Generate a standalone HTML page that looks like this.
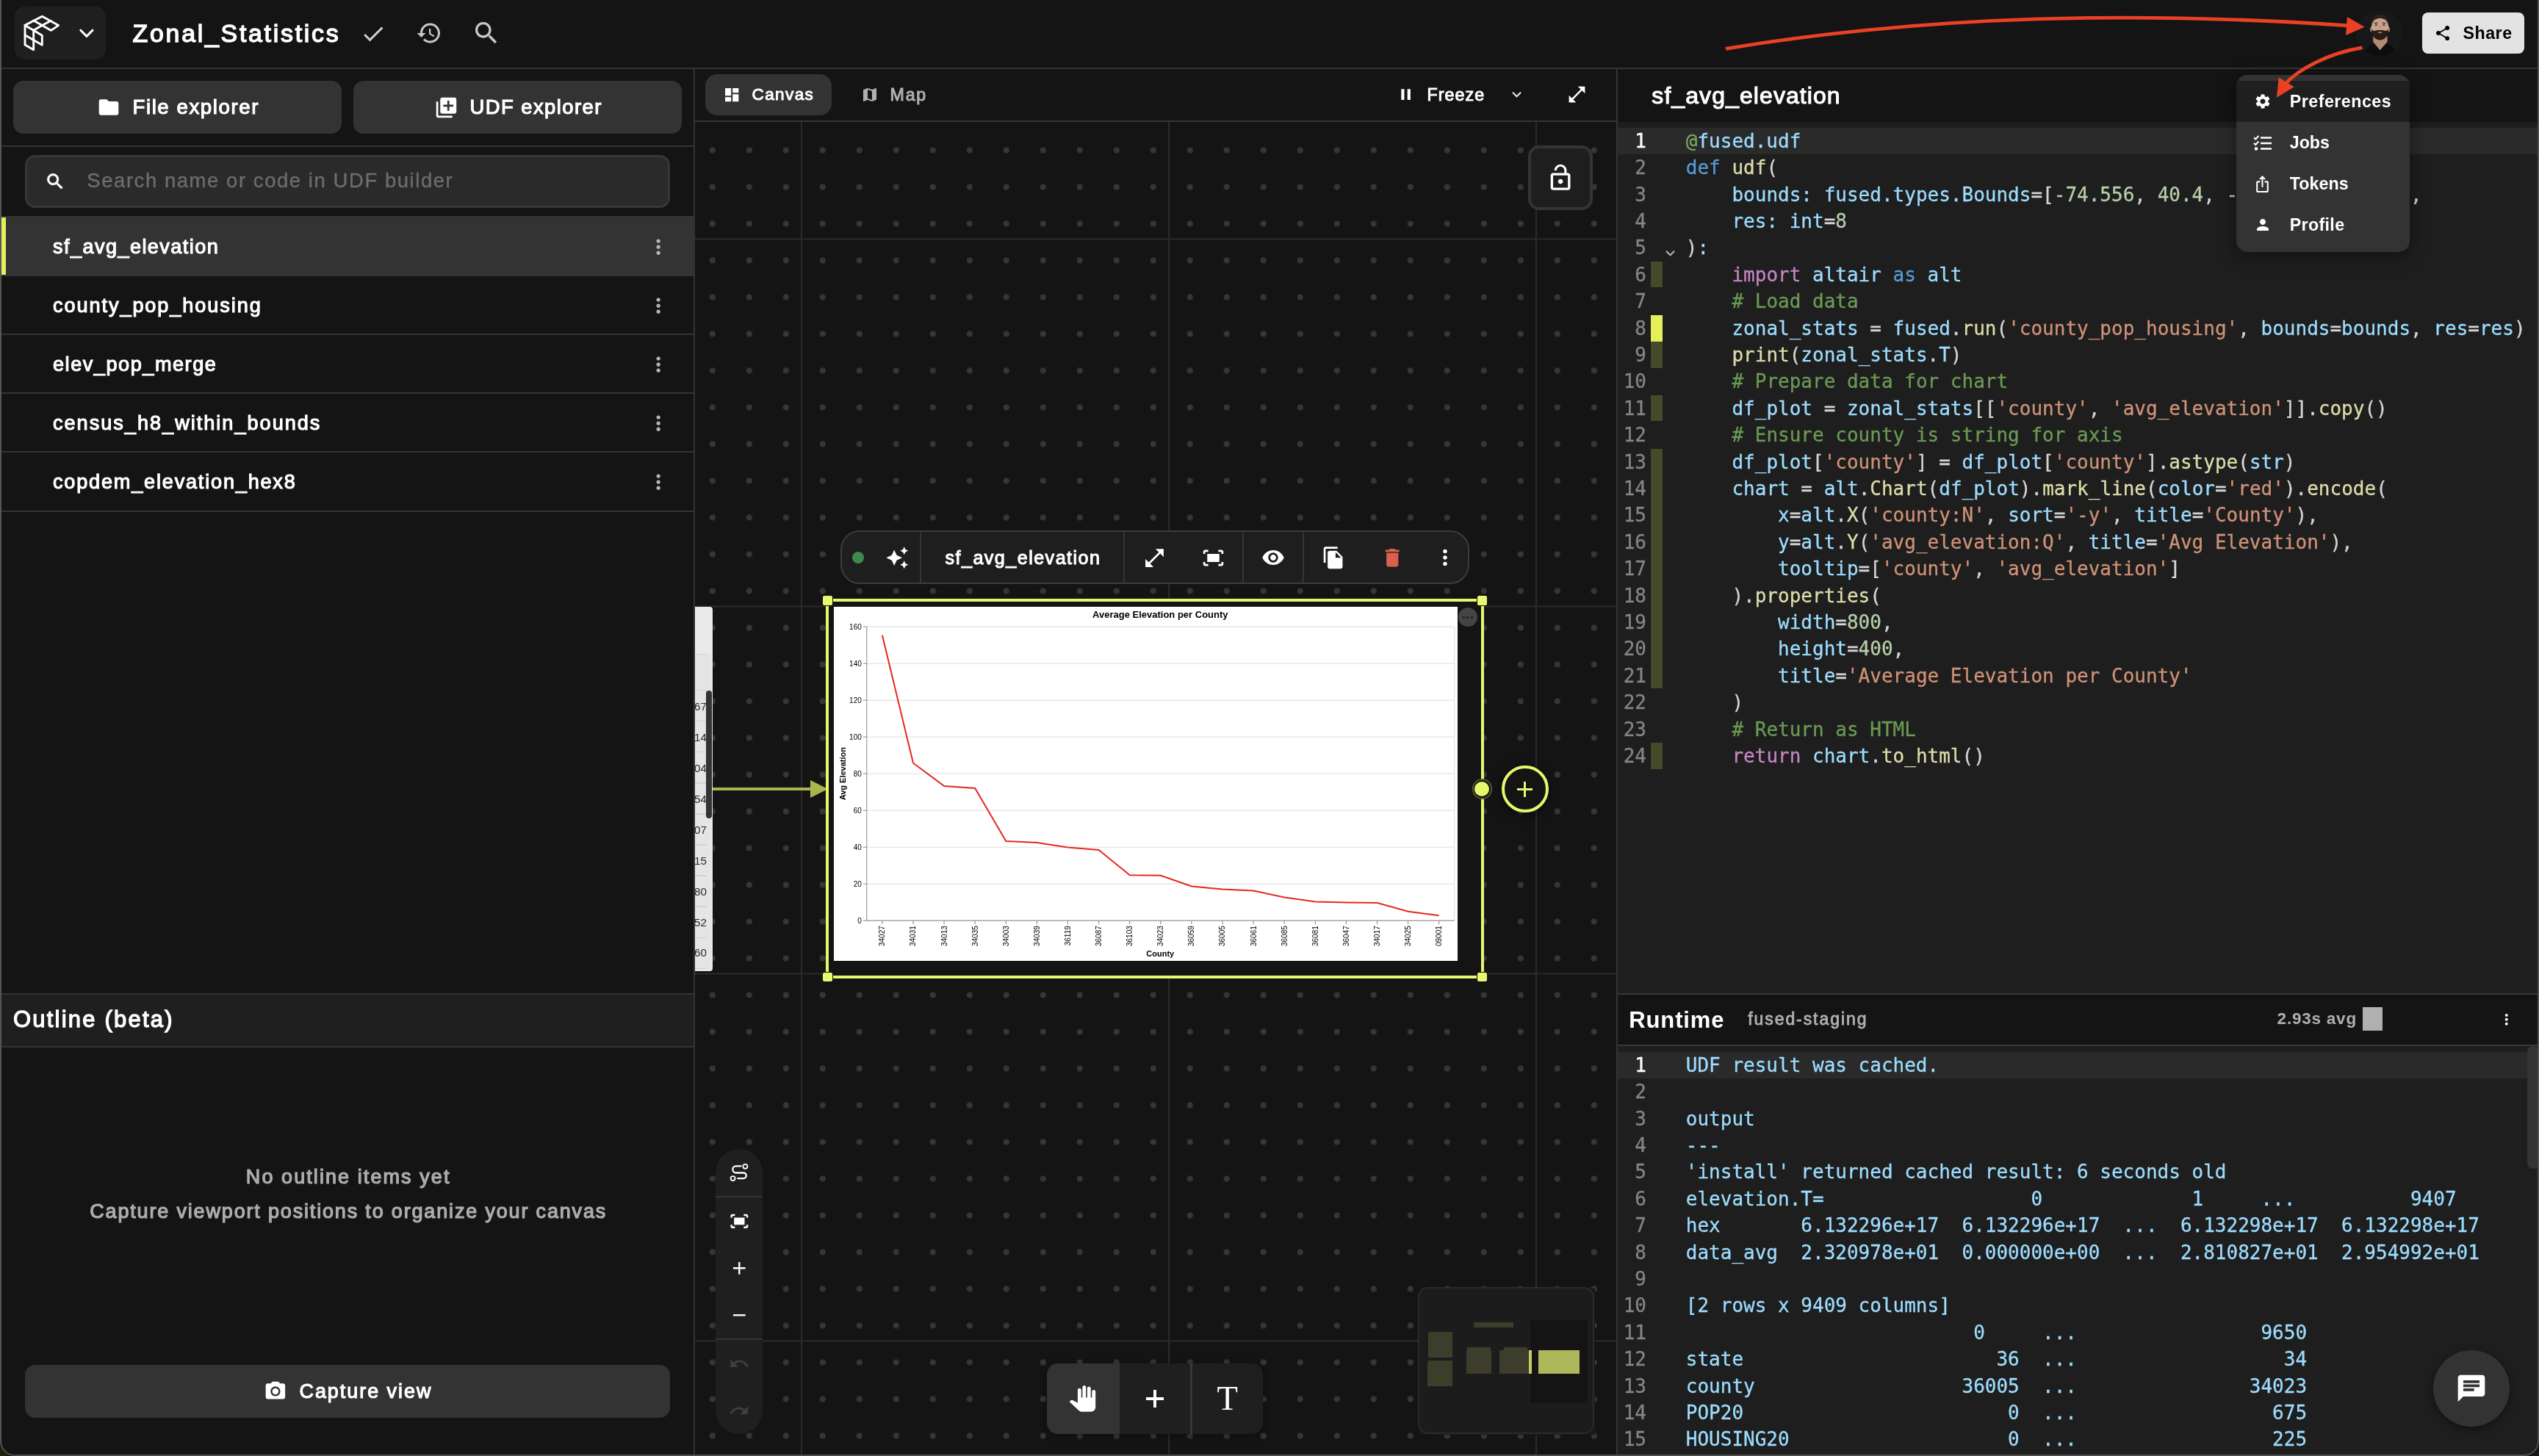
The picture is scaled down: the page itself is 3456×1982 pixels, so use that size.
<!DOCTYPE html>
<html lang="en"><head><meta charset="utf-8"><title>Zonal_Statistics</title>
<style>
html,body{margin:0;padding:0;}
body{width:3456px;height:1982px;overflow:hidden;background:#1b2313;font-family:"Liberation Sans",Arial,sans-serif;}
#app{will-change:transform;transform:translateZ(0);position:absolute;left:0;top:0;width:3456px;height:1982px;background:#141414;overflow:hidden;border-radius:0 0 20px 20px;}
.b{position:absolute;box-sizing:border-box;}
.t{position:absolute;white-space:pre;}
.ic{position:absolute;display:block;overflow:visible;}
.mono{font-family:"DejaVu Sans Mono","Liberation Mono",monospace;}
.code{-webkit-text-stroke:0.3px currentColor;position:absolute;white-space:pre;font-family:"DejaVu Sans Mono","Liberation Mono",monospace;font-size:26px;line-height:36.4px;height:36.4px;color:#d4d4d4;}
.ln{-webkit-text-stroke:0.3px currentColor;position:absolute;font-family:"DejaVu Sans Mono","Liberation Mono",monospace;font-size:26px;line-height:36.4px;height:36.4px;color:#858585;text-align:right;width:60px;}
.k{color:#569cd6}.c{color:#c586c0}.f{color:#dcdcaa}.v{color:#9cdcfe}.n{color:#b5cea8}.s{color:#ce9178}.m{color:#6a9955}.d{color:#78a860}
.serif{font-family:"Liberation Serif","DejaVu Serif",serif;}

</style></head>
<body>
<div style="position:absolute;left:3400px;top:1930px;width:56px;height:52px;background:#0f171c"></div>
<div id="app">
<!-- header -->
<div class="b " style="left:0.0px;top:0.0px;width:3456.0px;height:92.0px;background:#141414;"></div>
<div class="b " style="left:0.0px;top:92.0px;width:3456.0px;height:2.0px;background:#333;"></div>
<div class="b " style="left:20.0px;top:9.0px;width:124.0px;height:72.0px;background:#1f1f1f;border-radius:14px;"></div>
<svg class="ic" style="left:0;top:0;width:160px;height:92px" viewBox="0 0 160 92"><g fill="none" stroke="#fff" stroke-width="2.9" stroke-linejoin="round" stroke-linecap="round"><path d="M34 34.4L57.4 22.2L79.5 34.6L69.5 41.4L57.4 34.5L45.7 41.3Z"/><path d="M45.7 28.0L57.4 34.5L69.2 28.2"/><path d="M34 34.4V61L45.7 67.8V41.3"/><path d="M34 47.7L45.7 54.6"/><path d="M45.7 41.3L57.3 48.3V61.2L45.7 54.6"/><path d="M109.8 41.2L117.9 49.4L126 41.2" stroke-width="3"/></g></svg>
<div class="t " id="title" style="-webkit-text-stroke:1.40px #fff;left:180.6px;top:20.0px;font-size:33.88px;line-height:50px;height:50px;color:#fff;font-weight:normal;letter-spacing:2.733px;">Zonal_Statistics</div>
<svg class="ic" style="left:490.0px;top:27.6px;width:36.0px;height:36.0px;" viewBox="0 0 24 24"><path fill="#d0d0d0" d="M9 16.17L4.83 12l-1.42 1.41L9 19 21 7l-1.41-1.41z"/></svg>
<svg class="ic" style="left:565.6px;top:26.6px;width:36.0px;height:36.0px;" viewBox="0 0 24 24"><path fill="#c8c8c8" d="M13 3c-4.97 0-9 4.03-9 9H1l3.89 3.89.07.14L9 12H6c0-3.87 3.13-7 7-7s7 3.13 7 7-3.13 7-7 7c-1.93 0-3.68-.79-4.94-2.06l-1.42 1.42C8.27 19.99 10.51 21 13 21c4.97 0 9-4.03 9-9s-4.03-9-9-9zm-1 5v5l4.28 2.54.72-1.21-3.5-2.08V8H12z"/></svg>
<svg class="ic" style="left:642.0px;top:25.2px;width:40.0px;height:40.0px;" viewBox="0 0 24 24"><path fill="#c8c8c8" d="M15.5 14h-.79l-.28-.27C15.41 12.59 16 11.11 16 9.5 16 5.91 13.09 3 9.5 3S3 5.91 3 9.5 5.91 16 9.5 16c1.61 0 3.09-.59 4.23-1.57l.27.28v.79l5 4.99L20.49 19l-4.99-5zm-6 0C7.01 14 5 11.99 5 9.5S7.01 5 9.5 5 14 7.01 14 9.5 11.99 14 9.5 14z"/></svg>
<svg class="ic" style="left:3204.8px;top:11.1px;width:68px;height:68px" viewBox="-34 -34 68 68"><defs><clipPath id="avc"><circle cx="0" cy="0" r="31.8"/></clipPath><filter id="avb" x="-10%" y="-10%" width="120%" height="120%"><feGaussianBlur stdDeviation="0.55"/></filter></defs><circle cx="0" cy="0" r="31.8" fill="#18181b"/><g clip-path="url(#avc)"><g filter="url(#avb)"><path d="M-20 34C-20 20 -14 17 -9 14L0.6 23.4L10.5 14C16 17 22 20 22 34Z" fill="#0f0f11"/><path d="M-8.7 4H10.5V12L0.6 23.2L-8.7 12Z" fill="#b48a74"/><ellipse cx="-11.2" cy="-5" rx="1.6" ry="3.6" fill="#b98f7a"/><ellipse cx="12.4" cy="-5" rx="1.6" ry="3.6" fill="#b98f7a"/><ellipse cx="0.6" cy="-8" rx="11.7" ry="16" fill="#c9a28c"/><path d="M-11.3 -8C-12.4 -22 -4 -25 0.6 -25C5.2 -25 13.6 -22 12.5 -8C11.6 -15 9 -19.6 0.6 -20.2C-7.8 -19.6 -10.4 -15 -11.3 -8Z" fill="#2b231f"/><path d="M-11.2 -6C-11 4 -6 9.6 0.6 9.6C7.2 9.6 12.2 4 12.4 -6C10.8 -2.2 8.4 -3 6 -3.4C3.6 -4.2 2.2 -3.8 0.6 -3.8C-1 -3.8 -2.4 -4.2 -4.8 -3.4C-7.2 -3 -9.6 -2.2 -11.2 -6Z" fill="#2a1c17"/><ellipse cx="0.6" cy="-0.7" rx="3.1" ry="1.0" fill="#a8746a"/><path d="M-7.2 -13.4L-2.4 -13.9M3.6 -13.9L8.4 -13.4" stroke="#3b2d26" stroke-width="1.4" fill="none"/><ellipse cx="-4.6" cy="-11" rx="1.7" ry="0.9" fill="#3c3a3e"/><ellipse cx="5.9" cy="-11" rx="1.7" ry="0.9" fill="#3c3a3e"/><path d="M0.6 -10V-5.5" stroke="#b8917c" stroke-width="1.6" fill="none"/></g></g></svg>
<div class="b " style="left:3297.0px;top:17.0px;width:139.0px;height:56.0px;background:#e3e3e3;border-radius:8px;"></div>
<svg class="ic" style="left:3313.1px;top:32.8px;width:24.2px;height:24.2px;" viewBox="0 0 24 24"><path fill="#000" d="M18 16.08c-.76 0-1.44.3-1.96.77L8.91 12.7c.05-.23.09-.46.09-.7s-.04-.47-.09-.7l7.05-4.11c.54.5 1.25.81 2.04.81 1.66 0 3-1.34 3-3s-1.34-3-3-3-3 1.34-3 3c0 .24.04.47.09.7L8.04 9.81C7.5 9.31 6.79 9 6 9c-1.66 0-3 1.34-3 3s1.34 3 3 3c.79 0 1.5-.31 2.04-.81l7.12 4.16c-.05.21-.08.43-.08.65 0 1.61 1.31 2.92 2.92 2.92 1.61 0 2.92-1.31 2.92-2.92s-1.31-2.92-2.92-2.92z"/></svg>
<div class="t " id="share" style="left:3352.6px;top:28.3px;font-size:23.20px;line-height:34px;height:34px;color:#000;font-weight:bold;letter-spacing:0.500px;">Share</div>
<!-- left panel -->
<div class="b " style="left:944.0px;top:94.0px;width:2.0px;height:1888.0px;background:#333;"></div>
<div class="b " style="left:0.0px;top:198.0px;width:944.0px;height:2.0px;background:#333;"></div>
<div class="b " style="left:18.0px;top:110.0px;width:447.0px;height:72.0px;background:#333;border-radius:14px;"></div>
<svg class="ic" style="left:131.5px;top:130.4px;width:32.0px;height:32.0px;" viewBox="0 0 24 24"><path fill="#fff" d="M10 4H4c-1.1 0-1.99.9-1.99 2L2 18c0 1.1.9 2 2 2h16c1.1 0 2-.9 2-2V8c0-1.1-.9-2-2-2h-8l-2-2z"/></svg>
<div class="t " id="fileexp" style="-webkit-text-stroke:1.14px #fff;left:180.5px;top:125.6px;font-size:27.68px;line-height:40px;height:40px;color:#fff;font-weight:normal;letter-spacing:1.550px;">File explorer</div>
<div class="b " style="left:481.0px;top:110.0px;width:447.0px;height:72.0px;background:#333;border-radius:14px;"></div>
<svg class="ic" style="left:590.5px;top:129.5px;width:33.0px;height:33.0px;" viewBox="0 0 24 24"><path fill="#fff" d="M4 6H2v14c0 1.1.9 2 2 2h14v-2H4V6zm16-4H8c-1.1 0-2 .9-2 2v12c0 1.1.9 2 2 2h12c1.1 0 2-.9 2-2V4c0-1.1-.9-2-2-2zm-1 9h-4v4h-2v-4H9V9h4V5h2v4h4v2z"/></svg>
<div class="t " id="udfexp" style="-webkit-text-stroke:1.14px #fff;left:639.5px;top:125.6px;font-size:27.49px;line-height:40px;height:40px;color:#fff;font-weight:normal;letter-spacing:1.406px;">UDF explorer</div>
<div class="b " style="left:34.0px;top:211.0px;width:878.0px;height:72.0px;background:#2a2a2a;border:3px solid #373737;border-radius:14px;"></div>
<svg class="ic" style="left:61.2px;top:233.2px;width:28.2px;height:28.2px;stroke:#fff;stroke-width:.7px;" viewBox="0 0 24 24"><path fill="#fff" d="M15.5 14h-.79l-.28-.27C15.41 12.59 16 11.11 16 9.5 16 5.91 13.09 3 9.5 3S3 5.91 3 9.5 5.91 16 9.5 16c1.61 0 3.09-.59 4.23-1.57l.27.28v.79l5 4.99L20.49 19l-4.99-5zm-6 0C7.01 14 5 11.99 5 9.5S7.01 5 9.5 5 14 7.01 14 9.5 11.99 14 9.5 14z"/></svg>
<div class="t " id="ph" style="-webkit-text-stroke:0.4px #6c6c6c;left:118.3px;top:226.2px;font-size:27.50px;line-height:40px;height:40px;color:#6c6c6c;font-weight:normal;letter-spacing:1.550px;">Search name or code in UDF builder</div>
<div class="b " style="left:0.0px;top:294.0px;width:944.0px;height:81.5px;background:#333;"></div>
<div class="b " style="left:2.0px;top:296.0px;width:6.0px;height:78.0px;background:#e4f05a;"></div>
<div class="t " id="row0" style="-webkit-text-stroke:1.12px #fff;left:72.0px;top:315.6px;font-size:27.10px;line-height:40px;height:40px;color:#fff;font-weight:normal;letter-spacing:1.432px;">sf_avg_elevation</div>
<svg class="ic" style="left:880.0px;top:320.1px;width:32.3px;height:32.3px;" viewBox="0 0 24 24"><path fill="#b6b6b6" d="M12 8c1.1 0 2-.9 2-2s-.9-2-2-2-2 .9-2 2 .9 2 2 2zm0 2c-1.1 0-2 .9-2 2s.9 2 2 2 2-.9 2-2-.9-2-2-2zm0 6c-1.1 0-2 .9-2 2s.9 2 2 2 2-.9 2-2-.9-2-2-2z"/></svg>
<div class="b " style="left:0.0px;top:454.0px;width:944.0px;height:2.0px;background:#333;"></div>
<div class="t " id="row1" style="-webkit-text-stroke:1.12px #fff;left:72.0px;top:395.6px;font-size:27.10px;line-height:40px;height:40px;color:#fff;font-weight:normal;letter-spacing:1.926px;">county_pop_housing</div>
<svg class="ic" style="left:880.0px;top:400.1px;width:32.3px;height:32.3px;" viewBox="0 0 24 24"><path fill="#b6b6b6" d="M12 8c1.1 0 2-.9 2-2s-.9-2-2-2-2 .9-2 2 .9 2 2 2zm0 2c-1.1 0-2 .9-2 2s.9 2 2 2 2-.9 2-2-.9-2-2-2zm0 6c-1.1 0-2 .9-2 2s.9 2 2 2 2-.9 2-2-.9-2-2-2z"/></svg>
<div class="b " style="left:0.0px;top:534.0px;width:944.0px;height:2.0px;background:#333;"></div>
<div class="t " id="row2" style="-webkit-text-stroke:1.12px #fff;left:72.0px;top:475.6px;font-size:27.10px;line-height:40px;height:40px;color:#fff;font-weight:normal;letter-spacing:1.538px;">elev_pop_merge</div>
<svg class="ic" style="left:880.0px;top:480.1px;width:32.3px;height:32.3px;" viewBox="0 0 24 24"><path fill="#b6b6b6" d="M12 8c1.1 0 2-.9 2-2s-.9-2-2-2-2 .9-2 2 .9 2 2 2zm0 2c-1.1 0-2 .9-2 2s.9 2 2 2 2-.9 2-2-.9-2-2-2zm0 6c-1.1 0-2 .9-2 2s.9 2 2 2 2-.9 2-2-.9-2-2-2z"/></svg>
<div class="b " style="left:0.0px;top:614.0px;width:944.0px;height:2.0px;background:#333;"></div>
<div class="t " id="row3" style="-webkit-text-stroke:1.12px #fff;left:72.0px;top:555.6px;font-size:27.10px;line-height:40px;height:40px;color:#fff;font-weight:normal;letter-spacing:2.002px;">census_h8_within_bounds</div>
<svg class="ic" style="left:880.0px;top:560.1px;width:32.3px;height:32.3px;" viewBox="0 0 24 24"><path fill="#b6b6b6" d="M12 8c1.1 0 2-.9 2-2s-.9-2-2-2-2 .9-2 2 .9 2 2 2zm0 2c-1.1 0-2 .9-2 2s.9 2 2 2 2-.9 2-2-.9-2-2-2zm0 6c-1.1 0-2 .9-2 2s.9 2 2 2 2-.9 2-2-.9-2-2-2z"/></svg>
<div class="b " style="left:0.0px;top:695.0px;width:944.0px;height:2.0px;background:#333;"></div>
<div class="t " id="row4" style="-webkit-text-stroke:1.12px #fff;left:72.0px;top:635.6px;font-size:27.10px;line-height:40px;height:40px;color:#fff;font-weight:normal;letter-spacing:1.803px;">copdem_elevation_hex8</div>
<svg class="ic" style="left:880.0px;top:640.1px;width:32.3px;height:32.3px;" viewBox="0 0 24 24"><path fill="#b6b6b6" d="M12 8c1.1 0 2-.9 2-2s-.9-2-2-2-2 .9-2 2 .9 2 2 2zm0 2c-1.1 0-2 .9-2 2s.9 2 2 2 2-.9 2-2-.9-2-2-2zm0 6c-1.1 0-2 .9-2 2s.9 2 2 2 2-.9 2-2-.9-2-2-2z"/></svg>
<div class="b " style="left:0.0px;top:1352.0px;width:944.0px;height:74.0px;background:#1f1f1f;border-top:2px solid #333;border-bottom:2px solid #333;"></div>
<div class="t " id="outline" style="-webkit-text-stroke:1.28px #fff;left:18.0px;top:1365.8px;font-size:30.98px;line-height:44px;height:44px;color:#fff;font-weight:normal;letter-spacing:2.221px;">Outline (beta)</div>
<div class="t " id="empty1" style="-webkit-text-stroke:1.2px #adadad;left:3.2px;top:1582.5px;font-size:27.00px;line-height:38px;height:38px;color:#adadad;font-weight:normal;letter-spacing:2.080px;width:942.0px;text-align:center;">No outline items yet</div>
<div class="t " id="empty2" style="-webkit-text-stroke:1.2px #adadad;left:3.2px;top:1630.3px;font-size:27.00px;line-height:38px;height:38px;color:#adadad;font-weight:normal;letter-spacing:1.830px;width:942.0px;text-align:center;">Capture viewport positions to organize your canvas</div>
<div class="b " style="left:34.0px;top:1858.0px;width:878.0px;height:72.0px;background:#333;border-radius:14px;"></div>
<svg class="ic" style="left:359.1px;top:1877.9px;width:31.8px;height:31.8px;" viewBox="0 0 24 24"><path fill="#fff" d="M8.8 12a3.2 3.2 0 1 0 6.4 0a3.2 3.2 0 1 0 -6.4 0M9 2L7.17 4H4c-1.1 0-2 .9-2 2v12c0 1.1.9 2 2 2h16c1.1 0 2-.9 2-2V6c0-1.1-.9-2-2-2h-3.17L15 2H9zm3 15c-2.76 0-5-2.24-5-5s2.24-5 5-5 5 2.24 5 5-2.24 5-5 5z"/></svg>
<div class="t " id="capture" style="-webkit-text-stroke:1.11px #fff;left:407.5px;top:1873.6px;font-size:26.91px;line-height:40px;height:40px;color:#fff;font-weight:normal;letter-spacing:1.987px;">Capture view</div>
<!-- canvas -->
<div class="b " style="left:946.0px;top:164.0px;width:1254.0px;height:2.0px;background:#343434;"></div>
<div class="b " style="left:960.0px;top:101.0px;width:172.0px;height:56.0px;background:#333;border-radius:16px;"></div>
<svg class="ic" style="left:983.8px;top:116.7px;width:24.4px;height:24.4px;" viewBox="0 0 24 24"><path fill="#fff" d="M3 13h8V3H3v10zm0 8h8v-6H3v6zm10 0h8V11h-8v10zm0-18v6h8V3h-8z"/></svg>
<div class="t " id="canvas_t" style="-webkit-text-stroke:0.93px #fff;left:1023.5px;top:112.0px;font-size:22.55px;line-height:34px;height:34px;color:#fff;font-weight:normal;letter-spacing:1.377px;">Canvas</div>
<svg class="ic" style="left:1171.9px;top:116.9px;width:24.0px;height:24.0px;" viewBox="0 0 24 24"><path fill="#b0b0b0" d="M20.5 3l-.16.03L15 5.1 9 3 3.36 4.9c-.21.07-.36.25-.36.48V20.5c0 .28.22.5.5.5l.16-.03L9 18.9l6 2.1 5.64-1.9c.21-.07.36-.25.36-.48V3.5c0-.28-.22-.5-.5-.5zM15 19l-6-2.11V5l6 2.11V19z"/></svg>
<div class="t " id="map_t" style="-webkit-text-stroke:0.96px #b0b0b0;left:1211.5px;top:112.0px;font-size:23.23px;line-height:34px;height:34px;color:#b0b0b0;font-weight:normal;letter-spacing:1.794px;">Map</div>
<svg class="ic" style="left:1901.3px;top:116.3px;width:25.2px;height:25.2px;" viewBox="0 0 24 24"><path fill="#fff" d="M6 19h4V5H6v14zm8-14v14h4V5h-4z"/></svg>
<div class="t " id="freeze_t" style="-webkit-text-stroke:0.96px #fff;left:1942.5px;top:112.0px;font-size:23.23px;line-height:34px;height:34px;color:#fff;font-weight:normal;letter-spacing:1.055px;">Freeze</div>
<svg class="ic" style="left:2051.5px;top:116.3px;width:25.0px;height:25.0px;" viewBox="0 0 24 24"><path fill="#e8e8e8" d="M16.59 8.59L12 13.17 7.41 8.59 6 10l6 6 6-6z"/></svg>
<svg class="ic" style="left:2131.5px;top:114.4px;width:29.0px;height:29.0px;" viewBox="0 0 24 24"><path fill="#fff" d="M21 11V3h-8l3.29 3.29-10 10L3 13v8h8l-3.29-3.29 10-10z"/></svg>
<svg class="ic" style="left:946px;top:166px;width:1254px;height:1814px" viewBox="946 166 1254 1814"><defs><pattern id="dots" x="-5.2" y="-20.5" width="50" height="50" patternUnits="userSpaceOnUse"><circle cx="25" cy="25" r="4.05" fill="#363636"/></pattern></defs><rect x="946" y="166" width="1254" height="1814" fill="url(#dots)"/><rect x="1090" y="166" width="2" height="1814" fill="#2b2b2b"/><rect x="1590" y="166" width="2" height="1814" fill="#2b2b2b"/><rect x="2090" y="166" width="2" height="1814" fill="#2b2b2b"/><rect x="946" y="324.5" width="1254" height="2" fill="#2b2b2b"/><rect x="946" y="824.5" width="1254" height="2" fill="#2b2b2b"/><rect x="946" y="1324.5" width="1254" height="2" fill="#2b2b2b"/><rect x="946" y="1824.5" width="1254" height="2" fill="#2b2b2b"/></svg>
<div class="b " style="left:2200.0px;top:94.0px;width:2.0px;height:1888.0px;background:#343434;"></div>
<div class="b " style="left:2079.9px;top:197.9px;width:88.0px;height:88.2px;background:#1e1e1e;border:4px solid #343434;border-radius:15px;"></div>
<svg class="ic" style="left:2103.8px;top:222.0px;width:40.2px;height:40.2px;" viewBox="0 0 24 24"><path fill="#fff" d="M12 17c1.1 0 2-.9 2-2s-.9-2-2-2-2 .9-2 2 .9 2 2 2zm6-9h-1V6c0-2.76-2.24-5-5-5S7 3.24 7 6h1.9c0-1.71 1.39-3.1 3.1-3.1 1.71 0 3.1 1.39 3.1 3.1v2H6c-1.1 0-2 .9-2 2v10c0 1.1.9 2 2 2h12c1.1 0 2-.9 2-2V10c0-1.1-.9-2-2-2zm0 12H6V10h12v10z"/></svg>
<div class="b " style="left:946.0px;top:826.2px;width:23.8px;height:496.0px;background:#eaeaea;border-radius:0 4px 4px 0;overflow:hidden;"><div class="b" style="left:0;top:64px;width:22px;height:440px;background:#e5e5e5;border-top:1px solid #d4d4d4;border-radius:0 6px 0 0"></div><div class="b" style="left:0;top:112.6px;width:16px;height:1.5px;background:#d2d2d2"></div><div class="b" style="left:0;top:154.7px;width:16px;height:1.5px;background:#d2d2d2"></div><div class="b" style="left:0;top:196.8px;width:16px;height:1.5px;background:#d2d2d2"></div><div class="b" style="left:0;top:238.9px;width:16px;height:1.5px;background:#d2d2d2"></div><div class="b" style="left:0;top:281.0px;width:16px;height:1.5px;background:#d2d2d2"></div><div class="b" style="left:0;top:323.1px;width:16px;height:1.5px;background:#d2d2d2"></div><div class="b" style="left:0;top:365.2px;width:16px;height:1.5px;background:#d2d2d2"></div><div class="b" style="left:0;top:407.3px;width:16px;height:1.5px;background:#d2d2d2"></div><div class="b" style="left:0;top:449.4px;width:16px;height:1.5px;background:#d2d2d2"></div><div class="b" style="left:0;top:491.5px;width:16px;height:1.5px;background:#d2d2d2"></div><div class="t" style="left:-20px;width:36px;text-align:right;top:125.1px;font-size:15.2px;line-height:22px;color:#2a2a2a;">567</div><div class="t" style="left:-20px;width:36px;text-align:right;top:167.0px;font-size:15.2px;line-height:22px;color:#2a2a2a;">014</div><div class="t" style="left:-20px;width:36px;text-align:right;top:208.9px;font-size:15.2px;line-height:22px;color:#2a2a2a;">104</div><div class="t" style="left:-20px;width:36px;text-align:right;top:250.8px;font-size:15.2px;line-height:22px;color:#2a2a2a;">254</div><div class="t" style="left:-20px;width:36px;text-align:right;top:292.7px;font-size:15.2px;line-height:22px;color:#2a2a2a;">307</div><div class="t" style="left:-20px;width:36px;text-align:right;top:334.6px;font-size:15.2px;line-height:22px;color:#2a2a2a;">015</div><div class="t" style="left:-20px;width:36px;text-align:right;top:376.5px;font-size:15.2px;line-height:22px;color:#2a2a2a;">180</div><div class="t" style="left:-20px;width:36px;text-align:right;top:418.4px;font-size:15.2px;line-height:22px;color:#2a2a2a;">152</div><div class="t" style="left:-20px;width:36px;text-align:right;top:460.3px;font-size:15.2px;line-height:22px;color:#2a2a2a;">360</div><div class="b" style="left:15.2px;top:114px;width:7.6px;height:174px;background:#333336;border-radius:4px"></div></div>
<div class="b " style="left:970.0px;top:1072.0px;width:134.0px;height:4.0px;background:#aab64c;"></div>
<svg class="ic" style="left:1100px;top:1060px;width:30px;height:28px" viewBox="1100 1060 30 28"><path d="M1103 1062L1127 1074L1103 1086Z" fill="#aab64c"/></svg>
<div class="b " style="left:1144.0px;top:722.0px;width:856.0px;height:73.0px;background:#1e1e1e;border:2px solid #3c3c3c;border-radius:26px;"></div>
<div class="b " style="left:1252.0px;top:724.0px;width:2.0px;height:69.0px;background:#353535;"></div>
<div class="b " style="left:1529.0px;top:724.0px;width:2.0px;height:69.0px;background:#353535;"></div>
<div class="b " style="left:1691.0px;top:724.0px;width:2.0px;height:69.0px;background:#353535;"></div>
<div class="b " style="left:1773.0px;top:724.0px;width:2.0px;height:69.0px;background:#353535;"></div>
<div class="b " style="left:1160.0px;top:751.0px;width:16.0px;height:16.0px;background:#3d8a4b;border-radius:50%;"></div>
<svg class="ic" style="left:1204.8px;top:742.8px;width:32.5px;height:32.5px;" viewBox="0 0 24 24"><path fill="#fff" d="M19 9l1.25-2.75L23 5l-2.75-1.25L19 1l-1.25 2.75L15 5l2.75 1.25L19 9zm-7.5.5L9 4 6.5 9.5 1 12l5.5 2.5L9 20l2.5-5.5L17 12l-5.5-2.5zM19 15l-1.25 2.75L15 19l2.75 1.25L19 23l1.25-2.75L23 19l-2.75-1.25L19 15z"/></svg>
<div class="t " id="node_t" style="-webkit-text-stroke:1.04px #fff;left:1286.5px;top:738.6px;font-size:25.17px;line-height:40px;height:40px;color:#fff;font-weight:normal;letter-spacing:1.443px;">sf_avg_elevation</div>
<svg class="ic" style="left:1554.8px;top:742.5px;width:33.0px;height:33.0px;" viewBox="0 0 24 24"><path fill="#fff" d="M21 11V3h-8l3.29 3.29-10 10L3 13v8h8l-3.29-3.29 10-10z"/></svg>
<svg class="ic" style="left:1634.5px;top:742.5px;width:33.0px;height:33.0px;" viewBox="0 0 24 24"><path fill="#fff" d="M17 4h3c1.1 0 2 .9 2 2v2h-2V6h-3V4zM4 8V6h3V4H4c-1.1 0-2 .9-2 2v2h2zm16 8v2h-3v2h3c1.1 0 2-.9 2-2v-2h-2zM7 18H4v-2H2v2c0 1.1.9 2 2 2h3v-2zM18 8H6v8h12V8z"/></svg>
<svg class="ic" style="left:1717.0px;top:743.0px;width:32.0px;height:32.0px;" viewBox="0 0 24 24"><path fill="#fff" d="M12 4.5C7 4.5 2.73 7.61 1 12c1.73 4.39 6 7.5 11 7.5s9.27-3.11 11-7.5c-1.73-4.39-6-7.5-11-7.5zM12 17c-2.76 0-5-2.24-5-5s2.24-5 5-5 5 2.24 5 5-2.24 5-5 5zm0-8c-1.66 0-3 1.34-3 3s1.34 3 3 3 3-1.34 3-3-1.34-3-3-3z"/></svg>
<svg class="ic" style="left:1798.5px;top:742.8px;width:32.5px;height:32.5px;" viewBox="0 0 24 24"><path fill="#fff" d="M16 1H4c-1.1 0-2 .9-2 2v14h2V3h12V1zm-1 4l6 6v10c0 1.1-.9 2-2 2H7.99C6.89 23 6 22.1 6 21l.01-14c0-1.1.89-2 1.99-2h7zm-1 7h5.5L14 6.5V12z"/></svg>
<svg class="ic" style="left:1878.8px;top:742.8px;width:32.5px;height:32.5px;" viewBox="0 0 24 24"><path fill="#d9604c" d="M6 19c0 1.1.9 2 2 2h8c1.1 0 2-.9 2-2V7H6v12zM19 4h-3.5l-1-1h-5l-1 1H5v2h14V4z"/></svg>
<svg class="ic" style="left:1950.0px;top:742.0px;width:34.0px;height:34.0px;" viewBox="0 0 24 24"><path fill="#fff" d="M12 8c1.1 0 2-.9 2-2s-.9-2-2-2-2 .9-2 2 .9 2 2 2zm0 2c-1.1 0-2 .9-2 2s.9 2 2 2 2-.9 2-2-.9-2-2-2zm0 6c-1.1 0-2 .9-2 2s.9 2 2 2 2-.9 2-2-.9-2-2-2z"/></svg>
<div class="b " style="left:1124.2px;top:815.2px;width:895.7px;height:517.2px;background:rgba(20,20,20,.9);border:4.6px solid #e7f66c;"></div>
<div class="b " style="left:1120.3px;top:811.3px;width:12.4px;height:12.4px;background:#e9f871;border-radius:2px;box-shadow:0 0 0 1px #141414;"></div>
<div class="b " style="left:2011.4px;top:811.3px;width:12.4px;height:12.4px;background:#e9f871;border-radius:2px;box-shadow:0 0 0 1px #141414;"></div>
<div class="b " style="left:1120.3px;top:1323.9px;width:12.4px;height:12.4px;background:#e9f871;border-radius:2px;box-shadow:0 0 0 1px #141414;"></div>
<div class="b " style="left:2011.4px;top:1323.9px;width:12.4px;height:12.4px;background:#e9f871;border-radius:2px;box-shadow:0 0 0 1px #141414;"></div>
<svg class="ic" style="left:1134.7px;top:826.2px;width:849.0px;height:481.5px;background:#fff" viewBox="1134.7 826.2 849.0 481.5" font-family="Liberation Sans, Arial, sans-serif"><line x1="1179.5" x2="1979.5" y1="1253.4" y2="1253.4" stroke="#ddd" stroke-width="1"/><line x1="1174.5" x2="1179.5" y1="1253.4" y2="1253.4" stroke="#888" stroke-width="1"/><text x="1172.5" y="1256.8" font-size="10" text-anchor="end" fill="#000">0</text><line x1="1179.5" x2="1979.5" y1="1203.4" y2="1203.4" stroke="#ddd" stroke-width="1"/><line x1="1174.5" x2="1179.5" y1="1203.4" y2="1203.4" stroke="#888" stroke-width="1"/><text x="1172.5" y="1206.8" font-size="10" text-anchor="end" fill="#000">20</text><line x1="1179.5" x2="1979.5" y1="1153.4" y2="1153.4" stroke="#ddd" stroke-width="1"/><line x1="1174.5" x2="1179.5" y1="1153.4" y2="1153.4" stroke="#888" stroke-width="1"/><text x="1172.5" y="1156.8" font-size="10" text-anchor="end" fill="#000">40</text><line x1="1179.5" x2="1979.5" y1="1103.4" y2="1103.4" stroke="#ddd" stroke-width="1"/><line x1="1174.5" x2="1179.5" y1="1103.4" y2="1103.4" stroke="#888" stroke-width="1"/><text x="1172.5" y="1106.8" font-size="10" text-anchor="end" fill="#000">60</text><line x1="1179.5" x2="1979.5" y1="1053.4" y2="1053.4" stroke="#ddd" stroke-width="1"/><line x1="1174.5" x2="1179.5" y1="1053.4" y2="1053.4" stroke="#888" stroke-width="1"/><text x="1172.5" y="1056.8" font-size="10" text-anchor="end" fill="#000">80</text><line x1="1179.5" x2="1979.5" y1="1003.4" y2="1003.4" stroke="#ddd" stroke-width="1"/><line x1="1174.5" x2="1179.5" y1="1003.4" y2="1003.4" stroke="#888" stroke-width="1"/><text x="1172.5" y="1006.8" font-size="10" text-anchor="end" fill="#000">100</text><line x1="1179.5" x2="1979.5" y1="953.4" y2="953.4" stroke="#ddd" stroke-width="1"/><line x1="1174.5" x2="1179.5" y1="953.4" y2="953.4" stroke="#888" stroke-width="1"/><text x="1172.5" y="956.8" font-size="10" text-anchor="end" fill="#000">120</text><line x1="1179.5" x2="1979.5" y1="903.4" y2="903.4" stroke="#ddd" stroke-width="1"/><line x1="1174.5" x2="1179.5" y1="903.4" y2="903.4" stroke="#888" stroke-width="1"/><text x="1172.5" y="906.8" font-size="10" text-anchor="end" fill="#000">140</text><line x1="1179.5" x2="1979.5" y1="853.4" y2="853.4" stroke="#ddd" stroke-width="1"/><line x1="1174.5" x2="1179.5" y1="853.4" y2="853.4" stroke="#888" stroke-width="1"/><text x="1172.5" y="856.8" font-size="10" text-anchor="end" fill="#000">160</text><line x1="1179.5" x2="1179.5" y1="853.4" y2="1253.4" stroke="#888" stroke-width="1"/><line x1="1179.5" x2="1979.5" y1="1253.4" y2="1253.4" stroke="#888" stroke-width="1"/><line x1="1979.5" x2="1979.5" y1="853.4" y2="1253.4" stroke="#ddd" stroke-width="1"/><line x1="1200.6" x2="1200.6" y1="1253.4" y2="1258.4" stroke="#888" stroke-width="1"/><text transform="translate(1204.0,1260.4) rotate(-90)" font-size="10" text-anchor="end" fill="#000">34027</text><line x1="1242.7" x2="1242.7" y1="1253.4" y2="1258.4" stroke="#888" stroke-width="1"/><text transform="translate(1246.1,1260.4) rotate(-90)" font-size="10" text-anchor="end" fill="#000">34031</text><line x1="1284.8" x2="1284.8" y1="1253.4" y2="1258.4" stroke="#888" stroke-width="1"/><text transform="translate(1288.2,1260.4) rotate(-90)" font-size="10" text-anchor="end" fill="#000">34013</text><line x1="1326.9" x2="1326.9" y1="1253.4" y2="1258.4" stroke="#888" stroke-width="1"/><text transform="translate(1330.3,1260.4) rotate(-90)" font-size="10" text-anchor="end" fill="#000">34035</text><line x1="1369.0" x2="1369.0" y1="1253.4" y2="1258.4" stroke="#888" stroke-width="1"/><text transform="translate(1372.4,1260.4) rotate(-90)" font-size="10" text-anchor="end" fill="#000">34003</text><line x1="1411.1" x2="1411.1" y1="1253.4" y2="1258.4" stroke="#888" stroke-width="1"/><text transform="translate(1414.5,1260.4) rotate(-90)" font-size="10" text-anchor="end" fill="#000">34039</text><line x1="1453.2" x2="1453.2" y1="1253.4" y2="1258.4" stroke="#888" stroke-width="1"/><text transform="translate(1456.6,1260.4) rotate(-90)" font-size="10" text-anchor="end" fill="#000">36119</text><line x1="1495.3" x2="1495.3" y1="1253.4" y2="1258.4" stroke="#888" stroke-width="1"/><text transform="translate(1498.7,1260.4) rotate(-90)" font-size="10" text-anchor="end" fill="#000">36087</text><line x1="1537.4" x2="1537.4" y1="1253.4" y2="1258.4" stroke="#888" stroke-width="1"/><text transform="translate(1540.8,1260.4) rotate(-90)" font-size="10" text-anchor="end" fill="#000">36103</text><line x1="1579.5" x2="1579.5" y1="1253.4" y2="1258.4" stroke="#888" stroke-width="1"/><text transform="translate(1582.9,1260.4) rotate(-90)" font-size="10" text-anchor="end" fill="#000">34023</text><line x1="1621.6" x2="1621.6" y1="1253.4" y2="1258.4" stroke="#888" stroke-width="1"/><text transform="translate(1625.0,1260.4) rotate(-90)" font-size="10" text-anchor="end" fill="#000">36059</text><line x1="1663.7" x2="1663.7" y1="1253.4" y2="1258.4" stroke="#888" stroke-width="1"/><text transform="translate(1667.1,1260.4) rotate(-90)" font-size="10" text-anchor="end" fill="#000">36005</text><line x1="1705.8" x2="1705.8" y1="1253.4" y2="1258.4" stroke="#888" stroke-width="1"/><text transform="translate(1709.2,1260.4) rotate(-90)" font-size="10" text-anchor="end" fill="#000">36061</text><line x1="1747.9" x2="1747.9" y1="1253.4" y2="1258.4" stroke="#888" stroke-width="1"/><text transform="translate(1751.3,1260.4) rotate(-90)" font-size="10" text-anchor="end" fill="#000">36085</text><line x1="1790.0" x2="1790.0" y1="1253.4" y2="1258.4" stroke="#888" stroke-width="1"/><text transform="translate(1793.4,1260.4) rotate(-90)" font-size="10" text-anchor="end" fill="#000">36081</text><line x1="1832.1" x2="1832.1" y1="1253.4" y2="1258.4" stroke="#888" stroke-width="1"/><text transform="translate(1835.5,1260.4) rotate(-90)" font-size="10" text-anchor="end" fill="#000">36047</text><line x1="1874.2" x2="1874.2" y1="1253.4" y2="1258.4" stroke="#888" stroke-width="1"/><text transform="translate(1877.6,1260.4) rotate(-90)" font-size="10" text-anchor="end" fill="#000">34017</text><line x1="1916.3" x2="1916.3" y1="1253.4" y2="1258.4" stroke="#888" stroke-width="1"/><text transform="translate(1919.7,1260.4) rotate(-90)" font-size="10" text-anchor="end" fill="#000">34025</text><line x1="1958.4" x2="1958.4" y1="1253.4" y2="1258.4" stroke="#888" stroke-width="1"/><text transform="translate(1961.8,1260.4) rotate(-90)" font-size="10" text-anchor="end" fill="#000">09001</text><polyline points="1200.6,864.9 1242.7,1038.9 1284.8,1070.2 1326.9,1073.2 1369.0,1145.2 1411.1,1147.2 1453.2,1153.7 1495.3,1157.2 1537.4,1191.4 1579.5,1191.9 1621.6,1206.7 1663.7,1210.7 1705.8,1212.7 1747.9,1221.7 1790.0,1227.7 1832.1,1228.7 1874.2,1229.2 1916.3,1240.9 1958.4,1246.4" fill="none" stroke="#e3291f" stroke-width="2" stroke-linejoin="miter"/><text x="1579.0" y="841.3" font-size="13" font-weight="bold" text-anchor="middle" fill="#000" id="ctitle">Average Elevation per County</text><text x="1579.0" y="1302.0" font-size="11" font-weight="bold" text-anchor="middle" fill="#000">County</text><text transform="translate(1150.8,1053.4) rotate(-90)" font-size="11" font-weight="bold" text-anchor="middle" fill="#000">Avg Elevation</text></svg>
<div class="b " style="left:1984.5px;top:826.6px;width:26.8px;height:26.8px;background:#444;border-radius:50%;"></div>
<div class="b " style="left:1991.0px;top:838.5px;width:3.0px;height:3.0px;background:#1b1b1b;border-radius:50%;"></div>
<div class="b " style="left:1996.4px;top:838.5px;width:3.0px;height:3.0px;background:#1b1b1b;border-radius:50%;"></div>
<div class="b " style="left:2001.8px;top:838.5px;width:3.0px;height:3.0px;background:#1b1b1b;border-radius:50%;"></div>
<div class="b " style="left:2003.7px;top:1060.4px;width:27.4px;height:27.4px;background:#141414;border:2.2px solid #54582a;border-radius:50%;"></div>
<div class="b " style="left:2007.4px;top:1064.1px;width:20.0px;height:20.0px;background:#e7f66c;border-radius:50%;"></div>
<div class="b " style="left:2043.5px;top:1042.0px;width:64.2px;height:64.2px;background:#141414;border:4.6px solid #e7f66c;border-radius:50%;box-shadow:0 2px 14px rgba(0,0,0,.6);"></div>
<div class="b " style="left:2065.1px;top:1072.5px;width:21.0px;height:3.3px;background:#e7f66c;"></div>
<div class="b " style="left:2073.9px;top:1063.6px;width:3.3px;height:21.0px;background:#e7f66c;"></div>
<div class="b " style="left:974.1px;top:1563.9px;width:63.9px;height:388.1px;background:#1f1f1f;border-radius:32px;"></div>
<div class="b " style="left:974.1px;top:1628.0px;width:63.9px;height:2.0px;background:#333;"></div>
<div class="b " style="left:974.1px;top:1822.0px;width:63.9px;height:2.0px;background:#333;"></div>
<svg class="ic" style="left:985px;top:1575px;width:42px;height:42px" viewBox="985 1575 42 42"><g fill="none" stroke="#fff" stroke-width="2.3" stroke-linecap="round"><path d="M1008.6 1587.3H1001.9A4.6 4.6 0 0 0 1001.9 1596.5H1012A3.8 3.8 0 0 1 1012 1604.1H1004.3"/><circle cx="1014.4" cy="1587.8" r="3" stroke-width="1.8"/><circle cx="997.6" cy="1604.1" r="3" stroke-width="1.8"/></g></svg>
<svg class="ic" style="left:991.6px;top:1647.7px;width:28.7px;height:28.7px;" viewBox="0 0 24 24"><path fill="#fff" d="M17 4h3c1.1 0 2 .9 2 2v2h-2V6h-3V4zM4 8V6h3V4H4c-1.1 0-2 .9-2 2v2h2zm16 8v2h-3v2h3c1.1 0 2-.9 2-2v-2h-2zM7 18H4v-2H2v2c0 1.1.9 2 2 2h3v-2zM18 8H6v8h12V8z"/></svg>
<svg class="ic" style="left:991.7px;top:1711.5px;width:28.6px;height:28.6px;" viewBox="0 0 24 24"><path fill="#fff" d="M19 13h-6v6h-2v-6H5v-2h6V5h2v6h6v2z"/></svg>
<svg class="ic" style="left:991.7px;top:1775.9px;width:28.6px;height:28.6px;" viewBox="0 0 24 24"><path fill="#fff" d="M19 13H5v-2h14v2z"/></svg>
<svg class="ic" style="left:991.8px;top:1842.0px;width:28.4px;height:28.4px;" viewBox="0 0 24 24"><path fill="#3e3e3e" d="M12.5 8c-2.65 0-5.05.99-6.9 2.6L2 7v9h9l-3.62-3.62c1.39-1.16 3.16-1.88 5.12-1.88 3.54 0 6.55 2.31 7.6 5.5l2.37-.78C21.08 11.03 17.15 8 12.5 8z"/></svg>
<svg class="ic" style="left:991.8px;top:1905.9px;width:28.4px;height:28.4px;" viewBox="0 0 24 24"><path fill="#3e3e3e" d="M18.4 10.6C16.55 8.99 14.15 8 11.5 8c-4.65 0-8.58 3.03-9.96 7.22L3.9 16c1.05-3.19 4.05-5.5 7.6-5.5 1.95 0 3.73.72 5.12 1.88L13 16h9V7l-3.6 3.6z"/></svg>
<div class="b " style="left:1425.0px;top:1856.0px;width:293.7px;height:95.8px;background:#1f1f1f;border-radius:15px;overflow:hidden;box-shadow:0 2px 10px rgba(0,0,0,.35);"><div class="b" style="left:0;top:0;width:99.1px;height:96px;background:#333"></div></div>
<div class="b " style="left:1619.6px;top:1854.5px;width:3.5px;height:98.5px;background:#383838;"></div>
<svg class="ic" style="left:1453.6px;top:1886.1px;width:38.8px;height:35.8px" viewBox="0 0 24 24" preserveAspectRatio="none"><path fill="#fff" d="M23 5.5V20c0 2.2-1.8 4-4 4h-7.3c-1.08 0-2.1-.43-2.85-1.19L1 14.83s1.26-1.23 1.3-1.25c.22-.19.49-.29.79-.29.22 0 .42.06.6.16.04.01 4.31 2.46 4.31 2.46V4c0-.83.67-1.5 1.5-1.5S11 3.17 11 4v7h1V1.5c0-.83.67-1.5 1.5-1.5S15 .67 15 1.5V11h1V2.5c0-.83.67-1.5 1.5-1.5s1.5.67 1.5 1.5V11h1V5.5c0-.83.67-1.5 1.5-1.5s1.5.67 1.5 1.5z"/></svg>
<div class="b " style="left:1559.5px;top:1901.6px;width:24.7px;height:4.6px;background:#fff;"></div>
<div class="b " style="left:1569.5px;top:1891.5px;width:4.6px;height:24.7px;background:#fff;"></div>
<div class="t serif " id="ticon" style="left:1650.8px;top:1874.1px;font-size:46.50px;line-height:60px;height:60px;color:#fff;font-weight:normal;width:40.0px;text-align:center;">T</div>
<div class="b " style="left:1931.5px;top:1753.5px;width:239.5px;height:199.5px;background:#181818;"></div>
<div class="b " style="left:1930.3px;top:1752.0px;width:239.5px;height:199.9px;background:rgba(29,29,29,.94);border-radius:14px;box-shadow:0 0 0 2px #2a2a2a inset;overflow:hidden;"><div class="b" style="left:152.5px;top:45.3px;width:78.2px;height:113.0px;background:#141414"></div><div class="b" style="left:75.6px;top:47.8px;width:54.2px;height:7.2px;background:#3c3d2b"></div><div class="b" style="left:13.8px;top:60.8px;width:32.9px;height:35.2px;background:#3c3d2b"></div><div class="b" style="left:13.8px;top:100.2px;width:32.9px;height:3.0px;background:#3c3d2b"></div><div class="b" style="left:12.6px;top:103.0px;width:34.1px;height:32.0px;background:#3c3d2b"></div><div class="b" style="left:66.7px;top:81.9px;width:32.2px;height:4.2px;background:#3c3d2b"></div><div class="b" style="left:65.7px;top:86.0px;width:34.0px;height:32.0px;background:#3c3d2b"></div><div class="b" style="left:116.8px;top:81.9px;width:31.9px;height:4.2px;background:#3c3d2b"></div><div class="b" style="left:110.5px;top:86.0px;width:44.2px;height:32.0px;background:#3c3d2b"></div><div class="b" style="left:150.7px;top:86.0px;width:4.0px;height:32.0px;background:#c3cd62"></div><div class="b" style="left:163.7px;top:86.0px;width:56.1px;height:32.0px;background:#adb85b"></div></div>
<!-- right panel -->
<div class="t " id="rp_title" style="-webkit-text-stroke:1.1px #fff;left:2248.3px;top:107.3px;font-size:32.00px;line-height:46px;height:46px;color:#fff;font-weight:normal;letter-spacing:1.080px;">sf_avg_elevation</div>
<div class="b " style="left:2202.0px;top:166.0px;width:1252.0px;height:1186.0px;background:#1e1e1e;"></div>
<div class="b " style="left:2202.0px;top:173.8px;width:1252.0px;height:36.4px;background:#2a2a2a;"></div>
<div class="ln" style="left:2181px;top:173.8px;color:#fff;">1</div>
<div class="code" id="cl1" style="left:2294.8px;top:173.8px;"><span class="d">@</span><span class="v">fused.udf</span></div>
<div class="ln" style="left:2181px;top:210.2px;">2</div>
<div class="code" id="cl2" style="left:2294.8px;top:210.2px;"><span class="k">def</span> <span class="f">udf</span>(</div>
<div class="ln" style="left:2181px;top:246.6px;">3</div>
<div class="code" id="cl3" style="left:2294.8px;top:246.6px;">    <span class="v">bounds:</span> <span class="v">fused.types.Bounds</span>=[<span class="n">-74.556</span>, <span class="n">40.4</span>, <span class="n">-73.699</span>, <span class="n">41.103</span>],</div>
<div class="ln" style="left:2181px;top:283.0px;">4</div>
<div class="code" id="cl4" style="left:2294.8px;top:283.0px;">    <span class="v">res:</span> <span class="v">int</span>=<span class="n">8</span></div>
<div class="ln" style="left:2181px;top:319.4px;">5</div>
<div class="code" id="cl5" style="left:2294.8px;top:319.4px;">)<span class="v">:</span></div>
<div class="ln" style="left:2181px;top:355.8px;">6</div>
<div class="b " style="left:2247.0px;top:355.8px;width:16.0px;height:35.7px;background:#444a2a;"></div>
<div class="code" id="cl6" style="left:2294.8px;top:355.8px;">    <span class="c">import</span> <span class="v">altair</span> <span class="k">as</span> <span class="v">alt</span></div>
<div class="ln" style="left:2181px;top:392.2px;">7</div>
<div class="code" id="cl7" style="left:2294.8px;top:392.2px;">    <span class="m"># Load data</span></div>
<div class="ln" style="left:2181px;top:428.6px;">8</div>
<div class="b " style="left:2247.0px;top:428.6px;width:16.0px;height:36.6px;background:#e4f05a;"></div>
<div class="code" id="cl8" style="left:2294.8px;top:428.6px;">    <span class="v">zonal_stats</span> = <span class="v">fused</span>.<span class="f">run</span>(<span class="s">&#x27;county_pop_housing&#x27;</span>, <span class="v">bounds</span>=<span class="v">bounds</span>, <span class="v">res</span>=<span class="v">res</span>)</div>
<div class="ln" style="left:2181px;top:465.0px;">9</div>
<div class="b " style="left:2247.0px;top:465.0px;width:16.0px;height:35.7px;background:#444a2a;"></div>
<div class="code" id="cl9" style="left:2294.8px;top:465.0px;">    <span class="f">print</span>(<span class="v">zonal_stats</span>.<span class="v">T</span>)</div>
<div class="ln" style="left:2181px;top:501.4px;">10</div>
<div class="code" id="cl10" style="left:2294.8px;top:501.4px;">    <span class="m"># Prepare data for chart</span></div>
<div class="ln" style="left:2181px;top:537.8px;">11</div>
<div class="b " style="left:2247.0px;top:537.8px;width:16.0px;height:35.7px;background:#444a2a;"></div>
<div class="code" id="cl11" style="left:2294.8px;top:537.8px;">    <span class="v">df_plot</span> = <span class="v">zonal_stats</span>[[<span class="s">&#x27;county&#x27;</span>, <span class="s">&#x27;avg_elevation&#x27;</span>]].<span class="f">copy</span>()</div>
<div class="ln" style="left:2181px;top:574.2px;">12</div>
<div class="code" id="cl12" style="left:2294.8px;top:574.2px;">    <span class="m"># Ensure county is string for axis</span></div>
<div class="ln" style="left:2181px;top:610.6px;">13</div>
<div class="b " style="left:2247.0px;top:610.6px;width:16.0px;height:36.6px;background:#444a2a;"></div>
<div class="code" id="cl13" style="left:2294.8px;top:610.6px;">    <span class="v">df_plot</span>[<span class="s">&#x27;county&#x27;</span>] = <span class="v">df_plot</span>[<span class="s">&#x27;county&#x27;</span>].<span class="f">astype</span>(<span class="v">str</span>)</div>
<div class="ln" style="left:2181px;top:647.0px;">14</div>
<div class="b " style="left:2247.0px;top:647.0px;width:16.0px;height:36.6px;background:#444a2a;"></div>
<div class="code" id="cl14" style="left:2294.8px;top:647.0px;">    <span class="v">chart</span> = <span class="v">alt</span>.<span class="f">Chart</span>(<span class="v">df_plot</span>).<span class="f">mark_line</span>(<span class="v">color</span>=<span class="s">&#x27;red&#x27;</span>).<span class="f">encode</span>(</div>
<div class="ln" style="left:2181px;top:683.4px;">15</div>
<div class="b " style="left:2247.0px;top:683.4px;width:16.0px;height:36.6px;background:#444a2a;"></div>
<div class="code" id="cl15" style="left:2294.8px;top:683.4px;">        <span class="v">x</span>=<span class="v">alt</span>.<span class="f">X</span>(<span class="s">&#x27;county:N&#x27;</span>, <span class="v">sort</span>=<span class="s">&#x27;-y&#x27;</span>, <span class="v">title</span>=<span class="s">&#x27;County&#x27;</span>),</div>
<div class="ln" style="left:2181px;top:719.8px;">16</div>
<div class="b " style="left:2247.0px;top:719.8px;width:16.0px;height:36.6px;background:#444a2a;"></div>
<div class="code" id="cl16" style="left:2294.8px;top:719.8px;">        <span class="v">y</span>=<span class="v">alt</span>.<span class="f">Y</span>(<span class="s">&#x27;avg_elevation:Q&#x27;</span>, <span class="v">title</span>=<span class="s">&#x27;Avg Elevation&#x27;</span>),</div>
<div class="ln" style="left:2181px;top:756.2px;">17</div>
<div class="b " style="left:2247.0px;top:756.2px;width:16.0px;height:36.6px;background:#444a2a;"></div>
<div class="code" id="cl17" style="left:2294.8px;top:756.2px;">        <span class="v">tooltip</span>=[<span class="s">&#x27;county&#x27;</span>, <span class="s">&#x27;avg_elevation&#x27;</span>]</div>
<div class="ln" style="left:2181px;top:792.6px;">18</div>
<div class="b " style="left:2247.0px;top:792.6px;width:16.0px;height:36.6px;background:#444a2a;"></div>
<div class="code" id="cl18" style="left:2294.8px;top:792.6px;">    ).<span class="f">properties</span>(</div>
<div class="ln" style="left:2181px;top:829.0px;">19</div>
<div class="b " style="left:2247.0px;top:829.0px;width:16.0px;height:36.6px;background:#444a2a;"></div>
<div class="code" id="cl19" style="left:2294.8px;top:829.0px;">        <span class="v">width</span>=<span class="n">800</span>,</div>
<div class="ln" style="left:2181px;top:865.4px;">20</div>
<div class="b " style="left:2247.0px;top:865.4px;width:16.0px;height:36.6px;background:#444a2a;"></div>
<div class="code" id="cl20" style="left:2294.8px;top:865.4px;">        <span class="v">height</span>=<span class="n">400</span>,</div>
<div class="ln" style="left:2181px;top:901.8px;">21</div>
<div class="b " style="left:2247.0px;top:901.8px;width:16.0px;height:35.7px;background:#444a2a;"></div>
<div class="code" id="cl21" style="left:2294.8px;top:901.8px;">        <span class="v">title</span>=<span class="s">&#x27;Average Elevation per County&#x27;</span></div>
<div class="ln" style="left:2181px;top:938.2px;">22</div>
<div class="code" id="cl22" style="left:2294.8px;top:938.2px;">    )</div>
<div class="ln" style="left:2181px;top:974.6px;">23</div>
<div class="code" id="cl23" style="left:2294.8px;top:974.6px;">    <span class="m"># Return as HTML</span></div>
<div class="ln" style="left:2181px;top:1011.0px;">24</div>
<div class="b " style="left:2247.0px;top:1011.0px;width:16.0px;height:35.7px;background:#444a2a;"></div>
<div class="code" id="cl24" style="left:2294.8px;top:1011.0px;">    <span class="c">return</span> <span class="v">chart</span>.<span class="f">to_html</span>()</div>
<svg class="ic" style="left:2260.8px;top:332.1px;width:25.0px;height:25.0px;" viewBox="0 0 24 24"><path fill="#b4b4b4" d="M16.59 8.59L12 13.17 7.41 8.59 6 10l6 6 6-6z"/></svg>
<div class="b " style="left:2202.0px;top:1352.0px;width:1252.0px;height:72.0px;background:#141414;border-top:2px solid #383838;border-bottom:2px solid #383838;"></div>
<div class="t " id="runtime" style="left:2217.3px;top:1366.5px;font-size:31.00px;line-height:44px;height:44px;color:#fff;font-weight:bold;letter-spacing:0.870px;">Runtime</div>
<div class="t " id="staging" style="-webkit-text-stroke:0.8px #b0b0b0;left:2379.2px;top:1368.8px;font-size:23.00px;line-height:36px;height:36px;color:#b0b0b0;font-weight:normal;letter-spacing:1.930px;">fused-staging</div>
<div class="t " id="avg" style="left:3099.6px;top:1369.1px;font-size:22.50px;line-height:36px;height:36px;color:#b0b0b0;font-weight:bold;letter-spacing:0.780px;">2.93s avg</div>
<div class="b " style="left:3216.0px;top:1371.1px;width:27.2px;height:31.9px;background:#b0b0b0;"></div>
<svg class="ic" style="left:3400.4px;top:1375.7px;width:23.5px;height:23.5px;" viewBox="0 0 24 24"><path fill="#fff" d="M12 8c1.1 0 2-.9 2-2s-.9-2-2-2-2 .9-2 2 .9 2 2 2zm0 2c-1.1 0-2 .9-2 2s.9 2 2 2 2-.9 2-2-.9-2-2-2zm0 6c-1.1 0-2 .9-2 2s.9 2 2 2 2-.9 2-2-.9-2-2-2z"/></svg>
<div class="b " style="left:2202.0px;top:1424.0px;width:1252.0px;height:558.0px;background:#1e1e1e;"></div>
<div class="b " style="left:2202.0px;top:1431.8px;width:1238.0px;height:36.4px;background:#2a2a2a;"></div>
<div class="ln" style="left:2181px;top:1431.8px;color:#fff;">1</div>
<div class="code v" id="ol1" style="left:2294.8px;top:1431.8px;">UDF result was cached.</div>
<div class="ln" style="left:2181px;top:1468.2px;">2</div>
<div class="ln" style="left:2181px;top:1504.6px;">3</div>
<div class="code v" id="ol3" style="left:2294.8px;top:1504.6px;">output</div>
<div class="ln" style="left:2181px;top:1541.0px;">4</div>
<div class="code v" id="ol4" style="left:2294.8px;top:1541.0px;">---</div>
<div class="ln" style="left:2181px;top:1577.4px;">5</div>
<div class="code v" id="ol5" style="left:2294.8px;top:1577.4px;">&#x27;install&#x27; returned cached result: 6 seconds old</div>
<div class="ln" style="left:2181px;top:1613.8px;">6</div>
<div class="code v" id="ol6" style="left:2294.8px;top:1613.8px;">elevation.T=                  0             1     ...          9407</div>
<div class="ln" style="left:2181px;top:1650.2px;">7</div>
<div class="code v" id="ol7" style="left:2294.8px;top:1650.2px;">hex       6.132296e+17  6.132296e+17  ...  6.132298e+17  6.132298e+17</div>
<div class="ln" style="left:2181px;top:1686.6px;">8</div>
<div class="code v" id="ol8" style="left:2294.8px;top:1686.6px;">data_avg  2.320978e+01  0.000000e+00  ...  2.810827e+01  2.954992e+01</div>
<div class="ln" style="left:2181px;top:1723.0px;">9</div>
<div class="ln" style="left:2181px;top:1759.4px;">10</div>
<div class="code v" id="ol10" style="left:2294.8px;top:1759.4px;">[2 rows x 9409 columns]</div>
<div class="ln" style="left:2181px;top:1795.8px;">11</div>
<div class="code v" id="ol11" style="left:2294.8px;top:1795.8px;">                         0     ...                9650</div>
<div class="ln" style="left:2181px;top:1832.2px;">12</div>
<div class="code v" id="ol12" style="left:2294.8px;top:1832.2px;">state                      36  ...                  34</div>
<div class="ln" style="left:2181px;top:1868.6px;">13</div>
<div class="code v" id="ol13" style="left:2294.8px;top:1868.6px;">county                  36005  ...               34023</div>
<div class="ln" style="left:2181px;top:1905.0px;">14</div>
<div class="code v" id="ol14" style="left:2294.8px;top:1905.0px;">POP20                       0  ...                 675</div>
<div class="ln" style="left:2181px;top:1941.4px;">15</div>
<div class="code v" id="ol15" style="left:2294.8px;top:1941.4px;">HOUSING20                   0  ...                 225</div>
<div class="b " style="left:3440.0px;top:1424.3px;width:16.0px;height:166.8px;background:#343434;border-radius:8px;"></div>
<!-- dropdown menu -->
<div class="b " style="left:3044.0px;top:102.0px;width:236.0px;height:240.5px;background:#333;border-radius:15px;box-shadow:0 6px 24px rgba(0,0,0,.45);"></div>
<div class="b " style="left:3044.0px;top:110.0px;width:236.0px;height:56.2px;background:#1f1f1f;"></div>
<svg class="ic" style="left:3067.8px;top:126.0px;width:24.0px;height:24.0px;" viewBox="0 0 24 24"><path fill="#fff" d="M19.14 12.94c.04-.3.06-.61.06-.94 0-.32-.02-.64-.07-.94l2.03-1.58c.18-.14.23-.41.12-.61l-1.92-3.32c-.12-.22-.37-.29-.59-.22l-2.39.96c-.5-.38-1.03-.7-1.62-.94l-.36-2.54c-.04-.24-.24-.41-.48-.41h-3.84c-.24 0-.43.17-.47.41l-.36 2.54c-.59.24-1.13.57-1.62.94l-2.39-.96c-.22-.08-.47 0-.59.22L2.74 8.87c-.12.21-.08.47.12.61l2.03 1.58c-.05.3-.09.63-.09.94s.02.64.07.94l-2.03 1.58c-.18.14-.23.41-.12.61l1.92 3.32c.12.22.37.29.59.22l2.39-.96c.5.38 1.03.7 1.62.94l.36 2.54c.05.24.24.41.48.41h3.84c.24 0 .44-.17.47-.41l.36-2.54c.59-.24 1.13-.56 1.62-.94l2.39.96c.22.08.47 0 .59-.22l1.92-3.32c.12-.22.07-.47-.12-.61l-2.01-1.58zM12 15.6c-1.98 0-3.6-1.62-3.6-3.6s1.62-3.6 3.6-3.6 3.6 1.62 3.6 3.6-1.62 3.6-3.6 3.6z"/></svg>
<div class="t " id="mi0" style="left:3116.8px;top:120.2px;font-size:23.20px;line-height:36px;height:36px;color:#fff;font-weight:bold;letter-spacing:0.500px;">Preferences</div>
<svg class="ic" style="left:3066.5px;top:181.5px;width:26px;height:26px" viewBox="0 0 26 26"><g fill="none" stroke="#fff" stroke-width="2.4"><path d="M10 5.5H25M10 13H25M10 20.5H25"/><path d="M1 5.2L3.3 7.5L7.3 3" stroke-width="2"/><path d="M1 12.7L3.3 15L7.3 10.5" stroke-width="2"/></g><circle cx="4" cy="20.5" r="2.3" fill="#fff"/></svg>
<div class="t " id="mi1" style="left:3116.8px;top:176.2px;font-size:23.20px;line-height:36px;height:36px;color:#fff;font-weight:bold;">Jobs</div>
<svg class="ic" style="left:3067.3px;top:237.5px;width:25.0px;height:25.0px;" viewBox="0 0 24 24"><path fill="#fff" d="M16 5l-1.42 1.42-1.59-1.59V16h-1.98V4.83L9.42 6.42 8 5l4-4 4 4zm4 5v11c0 1.1-.9 2-2 2H6c-1.11 0-2-.9-2-2V10c0-1.11.89-2 2-2h3v2H6v11h12V10h-3V8h3c1.1 0 2 .9 2 2z"/></svg>
<div class="t " id="mi2" style="left:3116.8px;top:232.2px;font-size:23.20px;line-height:36px;height:36px;color:#fff;font-weight:bold;letter-spacing:0.100px;">Tokens</div>
<svg class="ic" style="left:3067.8px;top:294.0px;width:24.0px;height:24.0px;" viewBox="0 0 24 24"><path fill="#fff" d="M12 12c2.21 0 4-1.79 4-4s-1.79-4-4-4-4 1.79-4 4 1.79 4 4 4zm0 2c-2.67 0-8 1.34-8 4v2h16v-2c0-2.66-5.33-4-8-4z"/></svg>
<div class="t " id="mi3" style="left:3116.8px;top:288.2px;font-size:23.20px;line-height:36px;height:36px;color:#fff;font-weight:bold;letter-spacing:0.350px;">Profile</div>
<!-- annotation arrows -->
<svg class="ic" style="left:0;top:0;width:3456px;height:400px" viewBox="0 0 3456 400"><g fill="none" stroke="#ea4124" stroke-width="4.8" stroke-linecap="butt"><path d="M2349 66.3C2631 20 2913 15.5 3197 34.9"/><path d="M3215.5 64.8C3170 72 3128 94 3109 116"/></g><path d="M3195 22.9L3218.7 36.8L3193 47.9Z" fill="#ea4124"/><path d="M3101.8 105.6L3098.9 132.8L3122.8 118.2Z" fill="#ea4124"/></svg>
<!-- chat fab -->
<div class="b " style="left:3312.0px;top:1838.0px;width:104.0px;height:104.0px;background:#333;border-radius:50%;box-shadow:0 4px 14px rgba(0,0,0,.4);"></div>
<svg class="ic" style="left:3342.3px;top:1868.3px;width:44.0px;height:44.0px;" viewBox="0 0 24 24"><path fill="#fff" d="M20 2H4c-1.1 0-1.99.9-1.99 2L2 22l4-4h14c1.1 0 2-.9 2-2V4c0-1.1-.9-2-2-2zM6 9h12v2H6V9zm8 5H6v-2h8v2zm4-6H6V6h12v2z"/></svg>
<!-- window frame -->
<div class="b " style="left:0.0px;top:0.0px;width:3456.0px;height:1982.0px;border-left:2px solid #555;border-right:2px solid #505050;border-bottom:2.5px solid #4c4c4c;border-radius:0 0 20px 20px;pointer-events:none;"></div>
</div>
</body></html>
